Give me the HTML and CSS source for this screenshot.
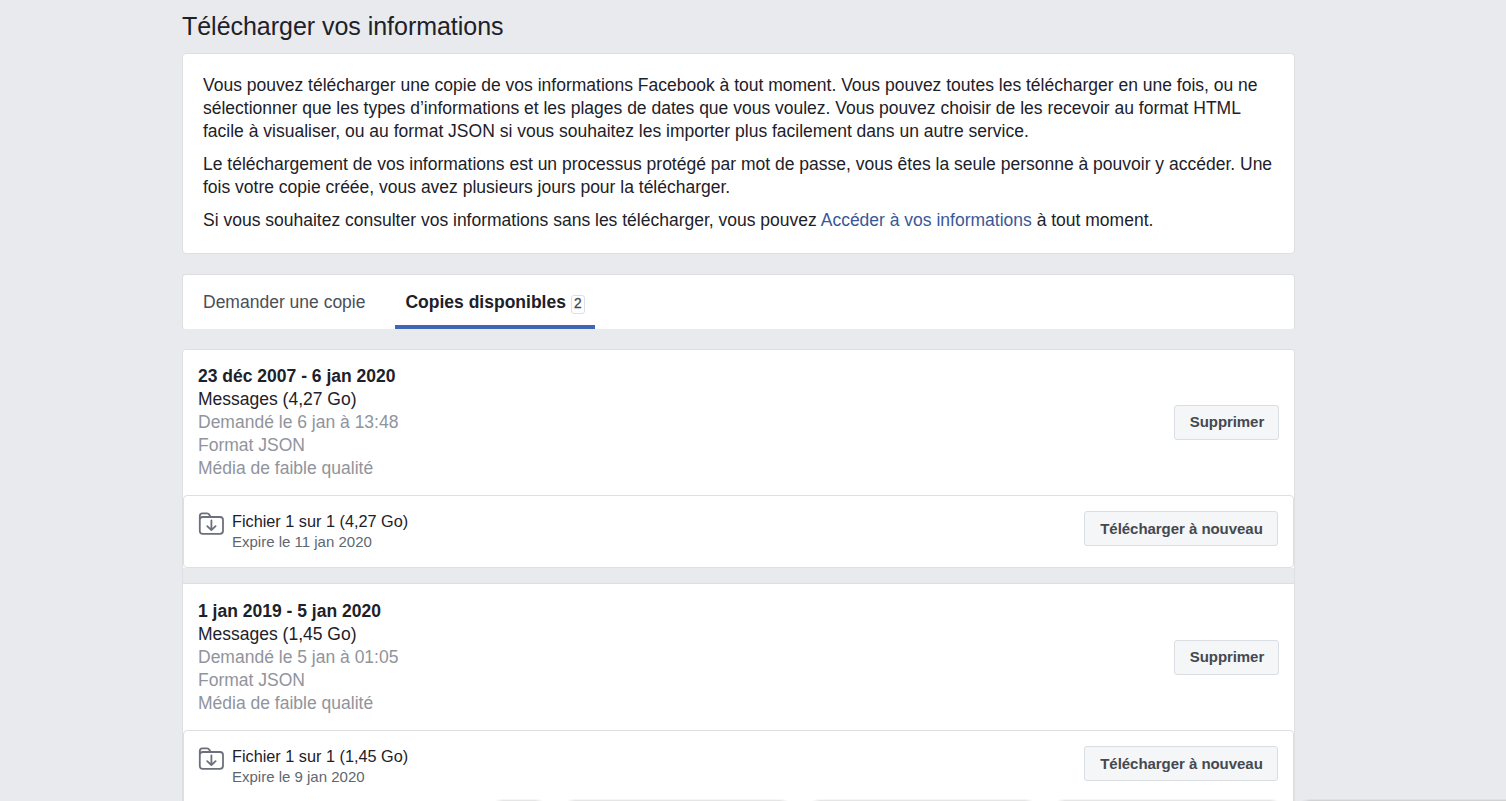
FILE: index.html
```html
<!DOCTYPE html>
<html lang="fr">
<head>
<meta charset="utf-8">
<title>Télécharger vos informations</title>
<link rel="stylesheet" href="styles.css">
</head>
<body>
<main class="page">
  <h1 class="title">Télécharger vos informations</h1>
  <section class="card intro">
    <p>Vous pouvez télécharger une copie de vos informations Facebook à tout moment. Vous pouvez toutes les télécharger en une fois, ou ne<br>sélectionner que les types d’informations et les plages de dates que vous voulez. Vous pouvez choisir de les recevoir au format HTML<br>facile à visualiser, ou au format JSON si vous souhaitez les importer plus facilement dans un autre service.</p>
    <p>Le téléchargement de vos informations est un processus protégé par mot de passe, vous êtes la seule personne à pouvoir y accéder. Une<br>fois votre copie créée, vous avez plusieurs jours pour la télécharger.</p>
    <p>Si vous souhaitez consulter vos informations sans les télécharger, vous pouvez <a class="link">Accéder à vos informations</a> à tout moment.</p>
  </section>
  <nav class="card tabs">
    <a class="tab">Demander une copie</a>
    <a class="tab active">Copies disponibles<span class="badge">2</span></a>
  </nav>
  <section class="card archives">
    <article class="archive">
      <div class="summary">
        <div>
          <h2 class="range">23 déc 2007 - 6 jan 2020</h2>
          <div>Messages (4,27 Go)</div>
          <div class="muted">Demandé le 6 jan à 13:48</div>
          <div class="muted">Format JSON</div>
          <div class="muted">Média de faible qualité</div>
        </div>
        <button class="btn remove">Supprimer</button>
      </div>
      <div class="file">
        <svg class="folder" width="26" height="23" viewBox="0 0 26 23" fill="none" stroke="#6b707b" stroke-width="1.8" stroke-linecap="round" stroke-linejoin="round"><path d="M1.8 7V4Q1.8 1.4 4.4 1.4H8.9Q10.6 1.4 11.5 3L12.6 5H22Q25 5 25 8V18.8Q25 21.8 22 21.8H4.8Q1.8 21.8 1.8 18.8V7.7Q1.8 5 4.8 5H12.6M13.4 8.5V17.7M9.2 14.2L13.4 18L17.6 14.2"/></svg>
        <div class="file-info">
          <div class="file-name">Fichier 1 sur 1 (4,27 Go)</div>
          <div class="expiry">Expire le 11 jan 2020</div>
        </div>
        <button class="btn">Télécharger à nouveau</button>
      </div>
    </article>
    <article class="archive">
      <div class="summary">
        <div>
          <h2 class="range">1 jan 2019 - 5 jan 2020</h2>
          <div>Messages (1,45 Go)</div>
          <div class="muted">Demandé le 5 jan à 01:05</div>
          <div class="muted">Format JSON</div>
          <div class="muted">Média de faible qualité</div>
        </div>
        <button class="btn remove">Supprimer</button>
      </div>
      <div class="file last">
        <svg class="folder" width="26" height="23" viewBox="0 0 26 23" fill="none" stroke="#6b707b" stroke-width="1.8" stroke-linecap="round" stroke-linejoin="round"><path d="M1.8 7V4Q1.8 1.4 4.4 1.4H8.9Q10.6 1.4 11.5 3L12.6 5H22Q25 5 25 8V18.8Q25 21.8 22 21.8H4.8Q1.8 21.8 1.8 18.8V7.7Q1.8 5 4.8 5H12.6M13.4 8.5V17.7M9.2 14.2L13.4 18L17.6 14.2"/></svg>
        <div class="file-info">
          <div class="file-name">Fichier 1 sur 1 (1,45 Go)</div>
          <div class="expiry">Expire le 9 jan 2020</div>
        </div>
        <button class="btn">Télécharger à nouveau</button>
      </div>
    </article>
  </section>
</main>
<div class="dock">
  <span class="dock-shadow small"></span>
  <span class="dock-shadow"></span>
  <span class="dock-shadow"></span>
  <span class="dock-shadow"></span>
  <span class="dock-shadow"></span>
</div>
</body>
</html>
```
FILE: styles.css
```css
* { box-sizing: border-box; }
body {
  margin: 0;
  height: 801px;
  overflow: hidden;
  background: #e9eaed;
  color: #1d2129;
  font: 17.5px/23px "Liberation Sans", Arial, sans-serif;
}
.page { width: 1113px; margin-left: 182px; }
.title {
  margin: 0;
  height: 53px;
  font-size: 25px;
  font-weight: 400;
  letter-spacing: -0.03px;
  line-height: 53px;
}
.card {
  background: #fff;
  border: 1px solid #dddfe2;
  border-radius: 4px;
}
.intro { height: 201px; padding: 20px; white-space: nowrap; }
.intro p { margin: 0 0 10px; }
.link { color: #385898; }
.tabs {
  display: flex;
  height: 56px;
  margin-top: 20px;
  padding-left: 10px;
  border-bottom-color: #e9eaed;
}
.tab {
  height: 54px;
  padding: 0 10px;
  color: #4b4f56;
  line-height: 55px;
  white-space: nowrap;
}
.tab.active {
  width: 200px;
  margin-left: 20px;
  border-bottom: 4px solid #4267b2;
  color: #1d2129;
  font-weight: 700;
}
.badge {
  display: inline-block;
  width: 14px;
  height: 19px;
  margin-left: 5px;
  border: 1px solid #dddfe2;
  border-radius: 3px;
  color: #444950;
  font-size: 13.75px;
  font-weight: 400;
  line-height: 16px;
  text-align: center;
  -webkit-text-stroke: 0.3px #444950;
}
.archives { margin-top: 19px; background: #e9eaed; }
.archive { background: #fff; border-radius: 3px 3px 0 0; }
.archive + .archive {
  margin-top: 15px;
  padding-top: 1px;
  border-top: 1px solid #dddfe2;
  border-radius: 0;
}
.summary {
  display: flex;
  justify-content: space-between;
  align-items: center;
  height: 145px;
  padding: 0 15px;
}
.range { margin: 0; font-size: 17.5px; line-height: 23px; }
.muted { color: #90949c; }
.file {
  display: flex;
  align-items: flex-start;
  height: 73px;
  padding: 15px 15px 0 14px;
  border: 1px solid #dddfe2;
  border-radius: 4px;
}
.file.last { height: 80px; }
.folder { margin: 1px 8px 0 0; }
.file-info { flex: 1; }
.file-name { font-size: 16.25px; line-height: 21px; }
.expiry { color: #606770; font-size: 15px; line-height: 20px; }
.btn {
  width: 194px;
  height: 35px;
  padding: 0 0 0 1px;
  border: 1px solid #dadde1;
  border-radius: 3px;
  background: #f5f6f7;
  color: #444950;
  font: 700 15px/32px "Liberation Sans", Arial, sans-serif;
  letter-spacing: -0.04px;
  white-space: nowrap;
}
.btn.remove { width: 105px; padding-bottom: 2px; letter-spacing: -0.08px; }
.dock {
  position: absolute;
  left: 495px;
  top: 799px;
  display: flex;
  gap: 24px;
  width: 1011px;
  height: 2px;
  overflow: hidden;
}
.dock-shadow {
  flex: none;
  width: 221px;
  height: 2px;
  background: linear-gradient(90deg, transparent, rgba(0,0,0,.1) 8px, rgba(0,0,0,.1) calc(100% - 8px), transparent);
  mask-image: linear-gradient(rgba(0,0,0,.35) 50%, #000 50%);
}
.dock-shadow.small { width: 48px; }
```
